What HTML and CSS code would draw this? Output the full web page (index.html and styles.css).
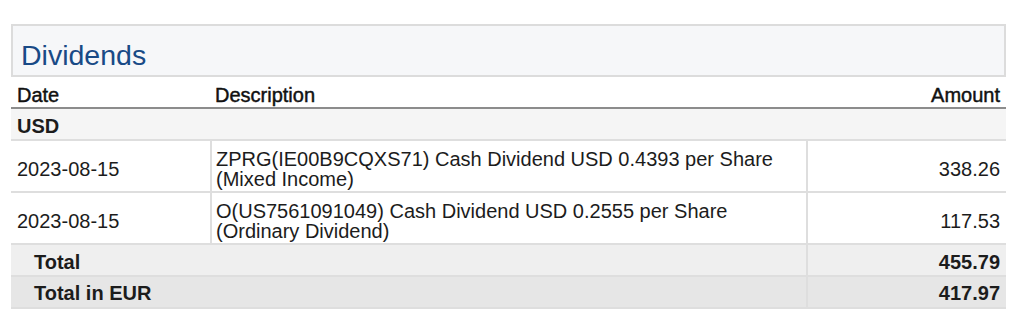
FILE: index.html
```html
<!DOCTYPE html>
<html lang="en">
<head>
<meta charset="utf-8">
<title>Dividends</title>
<link rel="stylesheet" href="styles.css">
</head>
<body>
<div class="report">
  <div class="section-head">
    <h2 class="section-title">Dividends</h2>
  </div>
  <table class="grid">
    <colgroup>
      <col class="c-date">
      <col class="c-desc">
      <col class="c-amt">
    </colgroup>
    <thead>
      <tr>
        <th class="h-date">Date</th>
        <th class="h-desc">Description</th>
        <th class="h-amt">Amount</th>
      </tr>
    </thead>
    <tbody>
      <tr class="currency">
        <td colspan="3">USD</td>
      </tr>
      <tr class="item">
        <td class="d-date">2023-08-15</td>
        <td class="d-desc">ZPRG(IE00B9CQXS71) Cash Dividend USD 0.4393 per Share (Mixed Income)</td>
        <td class="d-amt">338.26</td>
      </tr>
      <tr class="item">
        <td class="d-date">2023-08-15</td>
        <td class="d-desc">O(US7561091049) Cash Dividend USD 0.2555 per Share (Ordinary Dividend)</td>
        <td class="d-amt">117.53</td>
      </tr>
      <tr class="total">
        <td class="t-label" colspan="2">Total</td>
        <td class="t-amt">455.79</td>
      </tr>
      <tr class="total total-eur">
        <td class="t-label" colspan="2">Total in EUR</td>
        <td class="t-amt">417.97</td>
      </tr>
    </tbody>
  </table>
</div>
</body>
</html>
```

FILE: styles.css
```css
html, body {
  margin: 0;
  padding: 0;
  background: #ffffff;
}

body {
  font-family: "Liberation Sans", Arial, sans-serif;
  color: #1c1c1c;
}

.report {
  width: 995px;
  padding: 24px 0 0 11px;
}

.section-head {
  background: #f6f7f9;
  border: 2px solid #dcdcdc;
  padding: 13px 8px 3px;
}

.section-title {
  margin: 0;
  font-size: 28.5px;
  line-height: 33px;
  font-weight: normal;
  color: #194a86;
}

.grid {
  width: 995px;
  table-layout: fixed;
  border-collapse: separate;
  border-spacing: 0;
  margin-top: 1px;
  font-size: 20px;
  line-height: 20px;
}

.c-date { width: 199px; }
.c-desc { width: 596px; }
.c-amt { width: 200px; }

.grid th {
  font-weight: normal;
  -webkit-text-stroke: 0.45px #111;
  color: #111;
  padding: 7px 6px 2px;
  border-bottom: 2px solid #8c8c8c;
  text-align: left;
}

.grid th.h-desc { padding-left: 5px; }
.grid th.h-amt { text-align: right; }

.currency td {
  background: #f5f5f5;
  font-weight: bold;
  padding: 7px 6px 3px;
  border-bottom: 2px solid #dedede;
}

.item td {
  padding: 8px 6px 2px;
  border-bottom: 2px solid #dedede;
  vertical-align: middle;
}

.item .d-desc {
  border-left: 2px solid #dedede;
  padding-left: 4px;
  vertical-align: top;
}

.item .d-amt {
  text-align: right;
  border-left: 2px solid #dedede;
}

.total td {
  background: #efefef;
  font-weight: bold;
  padding: 7px 6px 3px;
  border-bottom: 2px solid #dedede;
}

.total .t-label { padding-left: 23px; }

.total .t-amt {
  text-align: right;
  border-left: 2px solid #dedede;
}

.total-eur td {
  background: #e6e6e6;
  padding: 6px 6px 4px;
}

.total-eur .t-label { padding-left: 23px; }
```
